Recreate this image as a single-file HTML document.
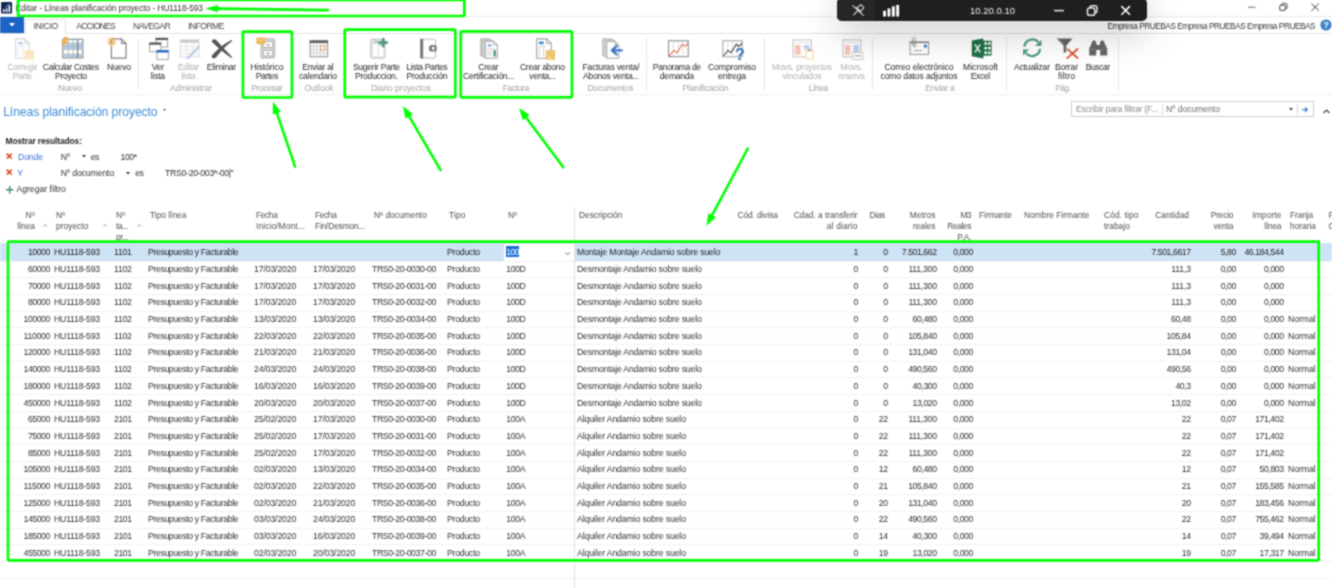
<!DOCTYPE html>
<html lang="es"><head><meta charset="utf-8"><title>Editar - Líneas planificación proyecto - HU1118-593</title>
<style>
html,body{margin:0;padding:0;background:#fff;}
body{width:1332px;height:588px;position:relative;overflow:hidden;font-family:"Liberation Sans",sans-serif;}
.t{position:absolute;white-space:nowrap;line-height:12px;}
.r{position:absolute;}
svg{position:absolute;overflow:visible;}
#blur{position:absolute;left:0;top:0;width:1332px;height:588px;background:#fff;filter:url(#soft);}
</style></head>
<body><svg width="0" height="0" style="position:absolute"><defs><filter id="soft" x="0" y="0" width="100%" height="100%" color-interpolation-filters="sRGB"><feConvolveMatrix order="3" kernelMatrix="1 2 1 2 6 2 1 2 1" edgeMode="duplicate" preserveAlpha="false"/></filter></defs></svg><div id="blur">
<svg style="left:0;top:0" width="14" height="15" viewBox="0 0 14 15"><rect x="1.1" y="2.1" width="11" height="11.4" rx="1" fill="#0f2553"/><rect x="3" y="9.2" width="1.6" height="2.9" fill="#fff"/><rect x="5.8" y="8.4" width="1.6" height="3.7" fill="#fff"/><rect x="8.5" y="5.4" width="1.7" height="6.7" fill="#fff"/><path d="M5.2 7.6L9.8 3.6" stroke="#c8d4ea" stroke-width="0.7"/></svg>
<span class="t " style="top:2px;font-size:8.4px;color:#333;letter-spacing:-0.070px;left:15.50px;">Editar - Líneas planificación proyecto - HU1118-593</span>
<svg style="left:0;top:0" width="1332" height="16" viewBox="0 0 1332 16"><path d="M1248.1 7.3H1255.4" stroke="#808080" stroke-width="1.2"/><g fill="none" stroke="#3c3c3c" stroke-width="1"><rect x="1279.7" y="5.2" width="5.6" height="5.2" rx="1.3"/><path d="M1281.4 4.8C1281.6 3.8 1282.2 3.4 1283.2 3.4H1285.4C1286.6 3.4 1287 3.9 1287 5V7.4C1287 8.4 1286.6 8.9 1285.7 9"/><path d="M1311.5 3.6L1318.9 10.8M1318.9 3.6L1311.5 10.8" stroke="#444"/></g></svg>
<div class="r" style="left:0px;top:16.1px;width:1332px;height:0.9px;background:#e9e9e9;"></div>
<div class="r" style="left:0px;top:16.8px;width:23.7px;height:15.9px;background:#1b63c4;"></div>
<svg style="left:9px;top:23px" width="6" height="4" viewBox="0 0 6 4"><path d="M0 0H6L3 3.6Z" fill="#fff"/></svg>
<div class="r" style="left:0px;top:32.5px;width:1332px;height:0.8px;background:#e2e2e2;"></div>
<div class="r" style="left:25px;top:19px;width:40.5px;height:14.6px;background:#fff;border:0.8px solid #e2e2e2;border-bottom:none;box-sizing:border-box;"></div>
<span class="t " style="top:20px;font-size:8.6px;color:#444;letter-spacing:-0.313px;left:33.50px;">INICIO</span>
<span class="t " style="top:20px;font-size:8.6px;color:#444;letter-spacing:-0.765px;left:76.20px;">ACCIONES</span>
<span class="t " style="top:20px;font-size:8.6px;color:#444;letter-spacing:-0.631px;left:133.00px;">NAVEGAR</span>
<span class="t " style="top:20px;font-size:8.6px;color:#444;letter-spacing:-0.522px;left:188.00px;">INFORME</span>
<span class="t " style="top:21px;font-size:8.2px;color:#333;letter-spacing:-0.413px;right:16.91px;text-align:right;">Empresa PRUEBAS Empresa PRUEBAS Empresa PRUEBAS</span>
<svg style="left:1319.5px;top:19.2px" width="12" height="12" viewBox="0 0 12 12"><circle cx="6" cy="6" r="5.6" fill="#3b7fc6"/><text x="6" y="9.3" font-size="9.4" font-weight="bold" fill="#fff" text-anchor="middle" font-family="Liberation Sans, sans-serif">?</text></svg>
<div class="r" style="left:0px;top:94.4px;width:1332px;height:1px;background:#f1f1f1;"></div>
<div class="r" style="left:138.3px;top:38px;width:0.8px;height:52px;background:#e6e6e6;"></div>
<div class="r" style="left:645.5px;top:38px;width:0.8px;height:52px;background:#e6e6e6;"></div>
<div class="r" style="left:764px;top:38px;width:0.8px;height:52px;background:#e6e6e6;"></div>
<div class="r" style="left:872px;top:38px;width:0.8px;height:52px;background:#e6e6e6;"></div>
<div class="r" style="left:1006px;top:38px;width:0.8px;height:52px;background:#e6e6e6;"></div>
<div class="r" style="left:1117.5px;top:38px;width:0.8px;height:52px;background:#e6e6e6;"></div>
<svg style="left:0;top:0" width="1332" height="100" viewBox="0 0 1332 100"><g opacity="0.42"><g opacity="1"><path d="M15.6 38.9H24.7L29.2 43.4V58.2H15.6Z" fill="#fff" stroke="#9a9a9a" stroke-width="1.1" stroke-linejoin="round"/><path d="M24.7 38.9V43.4H29.2" fill="none" stroke="#9a9a9a" stroke-width="0.9900000000000001"/></g><rect x="18" y="42" width="4.8" height="2.4" rx="0.8" fill="#4a88d8"/><path d="M18 46.5V56M22.6 46.5V56M18 46.5H25" stroke="#b5b5b5" stroke-width="0.8" fill="none"/><rect x="24.6" y="50.2" width="9.4" height="9.4" fill="#efc46c"/><path d="M26.5 57.2H28.6V59.4" stroke="#fff" stroke-width="0.7" fill="none"/></g><g><rect x="62.8" y="39.3" width="20" height="18.6" fill="#fff" stroke="#808080" stroke-width="1.1"/><rect x="63.4" y="43" width="18.8" height="6.6" fill="#b4d0ef"/><rect x="63.4" y="54.2" width="18.8" height="3.1" fill="#b4d0ef"/><path d="M62.8 43H82.8M62.8 46.3H82.8M62.8 49.6H82.8M62.8 54.2H82.8" stroke="#a9a9a9" stroke-width="0.6"/><path d="M68.3 39.3V57.9M73 39.3V57.9" stroke="#ababab" stroke-width="0.7"/><path d="M77.6 39.3V57.9" stroke="#777" stroke-width="1.1"/><path d="M64.4 36.6L68.2 37.4L66 40.6L68.6 41L62.2 47.6L63.6 42.8L61 42.4Z" fill="#efb04e"/></g><g opacity="1"><path d="M111.4 38.9H121.5L126.0 43.4V58.2H111.4Z" fill="#fff" stroke="#808080" stroke-width="1.2" stroke-linejoin="round"/><path d="M121.5 38.9V43.4H126.0" fill="none" stroke="#808080" stroke-width="1.08"/></g><g stroke="#efb04e" stroke-width="1.3" fill="none"><circle cx="111.6" cy="41.8" r="2.1"/><path d="M111.6 37.2V38.9M111.6 44.7V46.4M107 41.8H108.7M114.5 41.8H116.2M108.3 38.5L109.5 39.7M113.7 43.9L114.9 45.1M108.3 45.1L109.5 43.9M113.7 39.7L114.9 38.5"/></g><rect x="156" y="38.3" width="11.6" height="8.8" fill="#fff" stroke="#9a9a9a" stroke-width="0.9"/><rect x="155.55" y="37.849999999999994" width="12.5" height="2.2" fill="#595959"/><rect x="149.6" y="43" width="11.2" height="8.8" fill="#fff" stroke="#9a9a9a" stroke-width="0.9"/><rect x="149.15" y="42.55" width="12.1" height="2.2" fill="#595959"/><rect x="157" y="50.4" width="11.3" height="9" fill="#fff" stroke="#9a9a9a" stroke-width="0.9"/><rect x="156.55" y="49.949999999999996" width="12.200000000000001" height="2.6" fill="#2e6ec2"/><g opacity="0.5"><rect x="180.3" y="39.8" width="18.6" height="17.2" fill="#fff" stroke="#b0b0b0" stroke-width="0.9"/><rect x="180.3" y="39.8" width="18.6" height="3" fill="#999"/><path d="M180.3 46.4H198.9M180.3 49.9H198.9M180.3 53.4H198.9M186.5 42.8V57M192.7 42.8V57" stroke="#bdbdbd" stroke-width="0.7"/><path d="M186.4 59.4L187.6 56.9L198.4 45.7L199.9 47.1L189 58.4Z" fill="#5d97dc"/></g><path d="M211.6 41.6C212.4 39.2 214.8 38.6 216.2 40C220.4 44.6 226 50.8 232 57C232.4 57.6 231.6 58.2 231 57.8C224.6 53.4 217.6 47.8 211.6 41.6Z" fill="#555"/><path d="M211.8 55.8C217 49.4 224 43.6 231 40.2C231.8 39.8 232.4 40.6 231.8 41.2C226.2 45.6 220.2 51.6 216 57.6C214.4 59.2 211 58.2 211.8 55.8Z" fill="#555"/><rect x="261" y="38.8" width="13.6" height="19.2" rx="0.8" fill="#dedede" stroke="#a8a8a8" stroke-width="0.9"/><rect x="263.2" y="41.6" width="9.6" height="5.8" fill="#fff" stroke="#9a9a9a" stroke-width="0.8"/><rect x="263.2" y="50.2" width="9.6" height="5.8" fill="#fff" stroke="#9a9a9a" stroke-width="0.8"/><path d="M266.4 44.6H269.6M268 44.6V46.4M266.4 53.2H269.6M268 53.2V55" stroke="#8a8a8a" stroke-width="0.8"/><rect x="256.4" y="37.6" width="8.6" height="6.4" fill="#efb650"/><path d="M256.6 37.8L260.7 41.2L264.8 37.8" stroke="#fff" stroke-width="0.6" fill="none" opacity="0.7"/><rect x="310.2" y="40.8" width="17.4" height="16" fill="#fff" stroke="#8c8c8c" stroke-width="1"/><rect x="309.7" y="40.3" width="18.4" height="2.8" fill="#666"/><path d="M310.2 46.2H327.6M310.2 49.6H327.6M310.2 53H327.6M313.6 43V56.8M317 43V56.8M320.4 43V56.8M323.8 43V56.8" stroke="#b5b5b5" stroke-width="0.6"/><rect x="320.5" y="46" width="4.3" height="4" fill="#fff" stroke="#f09a58" stroke-width="1"/><rect x="370.8" y="39.2" width="14.2" height="19" rx="0.8" fill="#e4e4e4" stroke="#bdbdbd" stroke-width="0.9"/><rect x="373" y="44.4" width="4.6" height="11.8" fill="#fff"/><rect x="379" y="46" width="4.4" height="10.2" fill="#fff"/><path d="M373.4 42.6L378.4 41.4" stroke="#b5b5b5" stroke-width="0.7"/><path d="M383.2 38V47.2M378.6 42.6H387.8" stroke="#4c9a82" stroke-width="2.6"/><path d="M374 39.6L380.5 45" stroke="#4c9a82" stroke-width="0.8" opacity="0.6"/><rect x="421" y="39.2" width="14.6" height="18.8" rx="1.8" fill="#fff" stroke="#b9b9b9" stroke-width="1"/><rect x="420.2" y="38.8" width="3" height="19.6" fill="#777"/><rect x="429" y="45" width="7.8" height="6.6" rx="2.6" fill="#7c7c7c"/><rect x="432" y="47" width="2.4" height="2.6" fill="#fff"/><path d="M480.6 38.8H489.5L493 42V56H480.6Z" fill="#c9c9c9" stroke="#b0b0b0" stroke-width="0.8"/><path d="M482.8 40H491.6L495 43.4V57.2H482.8Z" fill="#d9d9d9" stroke="#b0b0b0" stroke-width="0.8"/><g opacity="1"><path d="M485.4 41.2H493.79999999999995L497.4 44.800000000000004V58.2H485.4Z" fill="#fff" stroke="#9a9a9a" stroke-width="0.9" stroke-linejoin="round"/><path d="M493.79999999999995 41.2V44.800000000000004H497.4" fill="none" stroke="#9a9a9a" stroke-width="0.81"/></g><rect x="487.8" y="44.2" width="3.8" height="2.4" rx="0.6" fill="#7fb0e8"/><path d="M487.6 48.8H496M488 50V56.4M490.6 50V56.4" stroke="#bdbdbd" stroke-width="0.8"/><rect x="493.4" y="50.2" width="2.5" height="6.4" fill="#4c9a82"/><g opacity="1"><path d="M536.6 38.9H546.7L551.2 43.4V58.2H536.6Z" fill="#fff" stroke="#a0a0a0" stroke-width="1.1" stroke-linejoin="round"/><path d="M546.7 38.9V43.4H551.2" fill="none" stroke="#a0a0a0" stroke-width="0.9900000000000001"/></g><rect x="538.8" y="41.4" width="5" height="2.8" rx="0.9" fill="#4a88d8"/><path d="M539 46.4H546M539.2 47V56M543.6 47V56" stroke="#c4c4c4" stroke-width="0.8" fill="none"/><rect x="545.8" y="50.2" width="9.3" height="9.6" fill="#efc46c"/><path d="M547.6 57.2H549.8V59.6" stroke="#fff" stroke-width="0.7" fill="none" opacity="0.8"/><path d="M602.4 38.8H612L615.4 42V55.6H602.4Z" fill="#d2d2d2" stroke="#b5b5b5" stroke-width="0.8"/><path d="M604.6 40H614L617.2 43.2V57H604.6Z" fill="#dedede" stroke="#b5b5b5" stroke-width="0.8"/><g opacity="1"><path d="M606.8 41.4H615.1999999999999L618.8 45.0V58.2H606.8Z" fill="#fff" stroke="#9a9a9a" stroke-width="0.9" stroke-linejoin="round"/><path d="M615.1999999999999 41.4V45.0H618.8" fill="none" stroke="#9a9a9a" stroke-width="0.81"/></g><path d="M616.6 46.2L611.8 50.3L616.6 54.4M612.4 50.3H621.8" fill="none" stroke="#3a78c8" stroke-width="2.3" stroke-linejoin="round" stroke-linecap="round"/><rect x="668.6" y="40.8" width="19.6" height="15.8" fill="#fff" stroke="#8a8a8a" stroke-width="1.1"/><path d="M673.4 41V56.4M678.2 41V56.4M683 41V56.4" stroke="#cfcfcf" stroke-width="0.7"/><path d="M669.2 55.8L673.8 50.4L677 52.8L682.2 44.4L685 46.4L688 43.4" fill="none" stroke="#e0704e" stroke-width="1.1"/><rect x="722.8" y="40.8" width="19.4" height="16" fill="#fff" stroke="#a5a5a5" stroke-width="1.1"/><path d="M727.6 41V56.4M732.4 41V56.4M737.2 41V56.4" stroke="#d4d4d4" stroke-width="0.7"/><path d="M723.4 56L728 50.4L731 52.8L736.2 44.4L739 46.4L742 43.2" fill="none" stroke="#444" stroke-width="1.1"/><text x="740" y="60" font-size="16" font-weight="bold" fill="#2f6fb8" text-anchor="middle" font-family="Liberation Sans, sans-serif">?</text><g opacity="0.5"><rect x="793.3" y="39.9" width="18" height="17" fill="#fff" stroke="#9c9c9c" stroke-width="1.3"/><path d="M795.5 42.6H809.5" stroke="#aaa" stroke-width="0.7"/><rect x="795.2" y="45" width="5.4" height="9.8" fill="#ee8a70"/><rect x="803.6" y="45" width="5.8" height="4.4" fill="#7fa8e6"/><rect x="805" y="49.8" width="9" height="9.8" rx="0.8" fill="#efc46c"/><rect x="806.6" y="51.6" width="5.8" height="6.6" fill="#fff"/><rect x="807.6" y="49" width="3.8" height="2" fill="#555"/></g><g opacity="0.5"><rect x="843.1" y="39.9" width="17.6" height="17" fill="#fff" stroke="#9c9c9c" stroke-width="1.3"/><path d="M845.2 42.6H859" stroke="#aaa" stroke-width="0.7"/><rect x="845" y="45" width="5.2" height="9.8" fill="#ee8a70"/><rect x="853.4" y="45" width="5.6" height="7.6" fill="#7fa8e6"/><rect x="852.6" y="52.4" width="10.2" height="7" fill="#fff" stroke="#8c8c8c" stroke-width="0.9"/><path d="M854.6 55.8H860.8" stroke="#555" stroke-width="1.2"/></g><rect x="910" y="42.4" width="18.6" height="12" fill="#fff" stroke="#9a9a9a" stroke-width="1"/><path d="M909.5 42.2H929.1" stroke="#777" stroke-width="1.2"/><rect x="924" y="44.6" width="2.8" height="3" fill="#3a78c8"/><path d="M914 50.6H922" stroke="#a5a5a5" stroke-width="1"/><path d="M912.4 45.4V39.4C912.4 37 915.6 37 915.6 39.4V45.6C915.6 47.4 913.6 47.4 913.6 45.6V40.4" fill="none" stroke="#8c8c8c" stroke-width="0.9"/><rect x="982.4" y="40.8" width="9.2" height="14.8" fill="#1e7145"/><g fill="#fff"><rect x="984.4" y="42.2" width="2.6" height="2.6"/><rect x="988" y="42.2" width="2.6" height="2.6"/><rect x="984.4" y="46.8" width="2.6" height="2.6"/><rect x="988" y="46.8" width="2.6" height="2.6"/><rect x="984.4" y="51.4" width="2.6" height="2.6"/><rect x="988" y="51.4" width="2.6" height="2.6"/></g><path d="M971.8 40.4L983.4 38.4V58.4L971.8 56.2Z" fill="#1e7145"/><path d="M975 44.4L980.2 52.4M980.2 44.4L975 52.4" stroke="#fff" stroke-width="1.4"/><g fill="none" stroke="#4c9a82" stroke-width="2.2"><path d="M1024.4 46.6A8 8 0 0 1 1038.4 42.2"/><path d="M1040 48.8A8 8 0 0 1 1026 53.2"/></g><path d="M1041.4 39.8V46H1035.2Z" fill="#4c9a82"/><path d="M1023 55.6V49.4H1029.2Z" fill="#4c9a82"/><path d="M1056.6 38.4H1072.4L1066.2 45.8V52.6H1063.6V45.8Z" fill="#666"/><path d="M1058 39.2L1063.6 44.6" stroke="#bbb" stroke-width="0.7"/><path d="M1067.4 49.2L1077.6 58M1077.6 49L1067.2 58.2" stroke="#d9502b" stroke-width="1.7" stroke-linecap="round"/><g fill="#666"><path d="M1092 42.4C1092 39.8 1096 39.8 1096 42.4L1096.8 45H1099.6L1100.2 42.4C1100.2 39.8 1104.2 39.8 1104.2 42.4L1107.2 48.6V55.6H1100.2V50H1096.2V55.6H1089.2V48.6Z"/></g><path d="M1089.2 49H1096M1100.2 49H1107.2" stroke="#8a8a8a" stroke-width="0.6"/></svg>
<span class="t " style="top:61px;font-size:8.6px;color:#b0b0b0;letter-spacing:-0.132px;left:-127.57px;width:300px;text-align:center;">Corregir</span>
<span class="t " style="top:70px;font-size:8.6px;color:#b0b0b0;letter-spacing:-0.311px;left:-127.66px;width:300px;text-align:center;">Parte</span>
<span class="t " style="top:61px;font-size:8.6px;color:#262626;letter-spacing:-0.313px;left:-79.16px;width:300px;text-align:center;">Calcular Costes</span>
<span class="t " style="top:70px;font-size:8.6px;color:#262626;letter-spacing:-0.242px;left:-79.12px;width:300px;text-align:center;">Proyecto</span>
<span class="t " style="top:61px;font-size:8.6px;color:#262626;letter-spacing:-0.172px;left:-31.09px;width:300px;text-align:center;">Nuevo</span>
<span class="t " style="top:82px;font-size:8.5px;color:#a2a2a2;letter-spacing:-0.114px;left:-80.06px;width:300px;text-align:center;">Nuevo</span>
<span class="t " style="top:61px;font-size:8.6px;color:#262626;letter-spacing:-0.303px;left:7.85px;width:300px;text-align:center;">Ver</span>
<span class="t " style="top:70px;font-size:8.6px;color:#262626;letter-spacing:-0.259px;left:7.87px;width:300px;text-align:center;">lista</span>
<span class="t " style="top:61px;font-size:8.6px;color:#b0b0b0;letter-spacing:-0.244px;left:38.38px;width:300px;text-align:center;">Editar</span>
<span class="t " style="top:70px;font-size:8.6px;color:#b0b0b0;letter-spacing:-0.259px;left:38.37px;width:300px;text-align:center;">lista</span>
<span class="t " style="top:61px;font-size:8.6px;color:#262626;letter-spacing:-0.258px;left:71.37px;width:300px;text-align:center;">Eliminar</span>
<span class="t " style="top:82px;font-size:8.5px;color:#a2a2a2;letter-spacing:-0.089px;left:40.96px;width:300px;text-align:center;">Administrar</span>
<span class="t " style="top:61px;font-size:8.6px;color:#262626;letter-spacing:-0.050px;left:116.98px;width:300px;text-align:center;">Histórico</span>
<span class="t " style="top:70px;font-size:8.6px;color:#262626;letter-spacing:-0.476px;left:116.76px;width:300px;text-align:center;">Partes</span>
<span class="t " style="top:82px;font-size:8.5px;color:#a2a2a2;letter-spacing:-0.376px;left:116.81px;width:300px;text-align:center;">Procesar</span>
<span class="t " style="top:61px;font-size:8.6px;color:#262626;letter-spacing:-0.273px;left:167.86px;width:300px;text-align:center;">Enviar al</span>
<span class="t " style="top:70px;font-size:8.6px;color:#262626;letter-spacing:-0.168px;left:167.92px;width:300px;text-align:center;">calendario</span>
<span class="t " style="top:82px;font-size:8.5px;color:#a2a2a2;letter-spacing:-0.042px;left:168.98px;width:300px;text-align:center;">Outlook</span>
<span class="t " style="top:61px;font-size:8.6px;color:#262626;letter-spacing:-0.282px;left:226.36px;width:300px;text-align:center;">Sugerir Parte</span>
<span class="t " style="top:70px;font-size:8.6px;color:#262626;letter-spacing:-0.219px;left:226.39px;width:300px;text-align:center;">Produccion.</span>
<span class="t " style="top:61px;font-size:8.6px;color:#262626;letter-spacing:-0.367px;left:276.82px;width:300px;text-align:center;">Lista Partes</span>
<span class="t " style="top:70px;font-size:8.6px;color:#262626;letter-spacing:-0.202px;left:276.90px;width:300px;text-align:center;">Producción</span>
<span class="t " style="top:82px;font-size:8.5px;color:#a2a2a2;letter-spacing:-0.088px;left:250.96px;width:300px;text-align:center;">Diario proyectos</span>
<span class="t " style="top:61px;font-size:8.6px;color:#262626;letter-spacing:-0.301px;left:338.35px;width:300px;text-align:center;">Crear</span>
<span class="t " style="top:70px;font-size:8.6px;color:#262626;letter-spacing:-0.218px;left:338.39px;width:300px;text-align:center;">Certificación...</span>
<span class="t " style="top:61px;font-size:8.6px;color:#262626;letter-spacing:-0.255px;left:392.37px;width:300px;text-align:center;">Crear abono</span>
<span class="t " style="top:70px;font-size:8.6px;color:#262626;letter-spacing:-0.275px;left:392.36px;width:300px;text-align:center;">venta...</span>
<span class="t " style="top:82px;font-size:8.5px;color:#a2a2a2;letter-spacing:-0.402px;left:365.80px;width:300px;text-align:center;">Factura</span>
<span class="t " style="top:61px;font-size:8.6px;color:#262626;letter-spacing:-0.151px;left:460.92px;width:300px;text-align:center;">Facturas venta/</span>
<span class="t " style="top:70px;font-size:8.6px;color:#262626;letter-spacing:-0.251px;left:460.87px;width:300px;text-align:center;">Abonos venta...</span>
<span class="t " style="top:82px;font-size:8.5px;color:#a2a2a2;letter-spacing:-0.171px;left:460.41px;width:300px;text-align:center;">Documentos</span>
<span class="t " style="top:61px;font-size:8.6px;color:#262626;letter-spacing:-0.330px;left:526.84px;width:300px;text-align:center;">Panorama de</span>
<span class="t " style="top:70px;font-size:8.6px;color:#262626;letter-spacing:-0.265px;left:526.87px;width:300px;text-align:center;">demanda</span>
<span class="t " style="top:61px;font-size:8.6px;color:#262626;letter-spacing:-0.074px;left:581.96px;width:300px;text-align:center;">Compromiso</span>
<span class="t " style="top:70px;font-size:8.6px;color:#262626;letter-spacing:-0.166px;left:581.92px;width:300px;text-align:center;">entrega</span>
<span class="t " style="top:82px;font-size:8.5px;color:#a2a2a2;letter-spacing:-0.132px;left:555.43px;width:300px;text-align:center;">Planificación</span>
<span class="t " style="top:61px;font-size:8.6px;color:#b0b0b0;letter-spacing:-0.174px;left:651.91px;width:300px;text-align:center;">Movs. proyectos</span>
<span class="t " style="top:70px;font-size:8.6px;color:#b0b0b0;letter-spacing:-0.163px;left:651.92px;width:300px;text-align:center;">vinculados</span>
<span class="t " style="top:61px;font-size:8.6px;color:#b0b0b0;letter-spacing:-0.187px;left:701.41px;width:300px;text-align:center;">Movs.</span>
<span class="t " style="top:70px;font-size:8.6px;color:#b0b0b0;letter-spacing:-0.382px;left:701.31px;width:300px;text-align:center;">reserva</span>
<span class="t " style="top:82px;font-size:8.5px;color:#a2a2a2;letter-spacing:-0.454px;left:668.27px;width:300px;text-align:center;">Línea</span>
<span class="t " style="top:61px;font-size:8.6px;color:#262626;letter-spacing:-0.070px;left:768.96px;width:300px;text-align:center;">Correo electrónico</span>
<span class="t " style="top:70px;font-size:8.6px;color:#262626;letter-spacing:-0.124px;left:768.94px;width:300px;text-align:center;">como datos adjuntos</span>
<span class="t " style="top:61px;font-size:8.6px;color:#262626;letter-spacing:0.013px;left:830.51px;width:300px;text-align:center;">Microsoft</span>
<span class="t " style="top:70px;font-size:8.6px;color:#262626;letter-spacing:-0.406px;left:830.30px;width:300px;text-align:center;">Excel</span>
<span class="t " style="top:82px;font-size:8.5px;color:#a2a2a2;letter-spacing:-0.273px;left:789.86px;width:300px;text-align:center;">Enviar a</span>
<span class="t " style="top:61px;font-size:8.6px;color:#262626;letter-spacing:-0.176px;left:881.91px;width:300px;text-align:center;">Actualizar</span>
<span class="t " style="top:61px;font-size:8.6px;color:#262626;letter-spacing:-0.149px;left:916.43px;width:300px;text-align:center;">Borrar</span>
<span class="t " style="top:70px;font-size:8.6px;color:#262626;letter-spacing:0.126px;left:916.56px;width:300px;text-align:center;">filtro</span>
<span class="t " style="top:61px;font-size:8.6px;color:#262626;letter-spacing:-0.461px;left:947.77px;width:300px;text-align:center;">Buscar</span>
<span class="t " style="top:82px;font-size:8.5px;color:#a2a2a2;letter-spacing:-0.621px;left:912.69px;width:300px;text-align:center;">Pág.</span>
<span class="t " style="top:104px;font-size:12.2px;color:#3f8bd8;letter-spacing:-0.098px;line-height:16px;left:3.20px;">Líneas planificación proyecto</span>
<svg style="left:163.1px;top:109.2px" width="3.2" height="2.2" viewBox="0 0 3.2 2.2"><path d="M0 0H3.2L1.6 2Z" fill="#555"/></svg>
<span class="t " style="top:135px;font-size:8.4px;color:#222;letter-spacing:-0.101px;font-weight:bold;left:5.60px;">Mostrar resultados:</span>
<svg style="left:6px;top:153.4px" width="6.4" height="6.4" viewBox="0 0 6.4 6.4"><path d="M0.6 0.6L5.8 5.8M5.8 0.6L0.6 5.8" stroke="#d9452b" stroke-width="1.5"/></svg>
<span class="t " style="top:151px;font-size:8.7px;color:#3c6fd6;letter-spacing:-0.127px;left:18.00px;">Donde</span>
<span class="t " style="top:151px;font-size:8.7px;color:#303030;letter-spacing:0.119px;left:60.70px;">Nº</span>
<svg style="left:81.9px;top:155.4px" width="4" height="3" viewBox="0 0 4 3"><path d="M0 0H4L2 2.6Z" fill="#333"/></svg>
<span class="t " style="top:151px;font-size:8.7px;color:#303030;letter-spacing:-0.694px;left:90.80px;">es</span>
<span class="t " style="top:151px;font-size:8.7px;color:#303030;letter-spacing:-0.425px;left:120.50px;">100*</span>
<svg style="left:6px;top:169.20000000000002px" width="6.4" height="6.4" viewBox="0 0 6.4 6.4"><path d="M0.6 0.6L5.8 5.8M5.8 0.6L0.6 5.8" stroke="#d9452b" stroke-width="1.5"/></svg>
<span class="t " style="top:167px;font-size:8.7px;color:#3c6fd6;left:17.20px;">Y</span>
<span class="t " style="top:167px;font-size:8.7px;color:#303030;letter-spacing:-0.118px;left:60.70px;">Nº documento</span>
<svg style="left:126.30000000000001px;top:171.60000000000002px" width="4" height="3" viewBox="0 0 4 3"><path d="M0 0H4L2 2.6Z" fill="#333"/></svg>
<span class="t " style="top:167px;font-size:8.7px;color:#303030;letter-spacing:-0.694px;left:135.30px;">es</span>
<span class="t " style="top:167px;font-size:8.7px;color:#303030;letter-spacing:-0.292px;left:165.00px;">TRS0-20-003*-00|&#x27;&#x27;</span>
<svg style="left:6px;top:186px" width="7.4" height="7.4" viewBox="0 0 7.4 7.4"><path d="M3.7 0V7.4M0 3.7H7.4" stroke="#3c8f6a" stroke-width="1.5"/></svg>
<span class="t " style="top:183px;font-size:8.7px;color:#303030;letter-spacing:-0.014px;left:16.40px;">Agregar filtro</span>
<div class="r" style="left:1071px;top:101px;width:242.5px;height:16px;background:#fff;border:0.8px solid #cfcfcf;box-sizing:border-box;"></div>
<span class="t " style="top:103px;font-size:8.7px;color:#8a8a8a;letter-spacing:-0.203px;left:1076.00px;">Escribir para filtrar (F...</span>
<div class="r" style="left:1161.5px;top:103.5px;width:0.8px;height:11px;background:#d8d8d8;"></div>
<span class="t " style="top:103px;font-size:8.7px;color:#6a6a6a;letter-spacing:-0.077px;left:1166.00px;">Nº documento</span>
<svg style="left:1289px;top:108.39999999999999px" width="4" height="3" viewBox="0 0 4 3"><path d="M0 0H4L2 2.6Z" fill="#333"/></svg>
<div class="r" style="left:1296.5px;top:103.5px;width:0.8px;height:11px;background:#d8d8d8;"></div>
<svg style="left:1301.5px;top:106.8px" width="6" height="5.4" viewBox="0 0 6 5.4"><path d="M0 2.7H5M3 0.5L5.3 2.7L3 4.9" fill="none" stroke="#2a6fd0" stroke-width="1.1"/></svg>
<svg style="left:1323px;top:108.5px" width="7" height="4.5" viewBox="0 0 7 4.5"><path d="M0.5 4L3.5 1L6.5 4" fill="none" stroke="#444" stroke-width="1.2"/></svg>
<div class="r" style="left:0px;top:243.4px;width:1332px;height:17.3px;background:#cfe3f6;"></div>
<div class="r" style="left:0px;top:260.5px;width:1332px;height:0.8px;background:#f2f2f2;"></div>
<div class="r" style="left:0px;top:277.2px;width:1332px;height:0.8px;background:#f2f2f2;"></div>
<div class="r" style="left:0px;top:293.9px;width:1332px;height:0.8px;background:#f2f2f2;"></div>
<div class="r" style="left:0px;top:310.6px;width:1332px;height:0.8px;background:#f2f2f2;"></div>
<div class="r" style="left:0px;top:327.3px;width:1332px;height:0.8px;background:#f2f2f2;"></div>
<div class="r" style="left:0px;top:344.0px;width:1332px;height:0.8px;background:#f2f2f2;"></div>
<div class="r" style="left:0px;top:360.7px;width:1332px;height:0.8px;background:#f2f2f2;"></div>
<div class="r" style="left:0px;top:377.4px;width:1332px;height:0.8px;background:#f2f2f2;"></div>
<div class="r" style="left:0px;top:394.1px;width:1332px;height:0.8px;background:#f2f2f2;"></div>
<div class="r" style="left:0px;top:410.79999999999995px;width:1332px;height:0.8px;background:#f2f2f2;"></div>
<div class="r" style="left:0px;top:427.5px;width:1332px;height:0.8px;background:#f2f2f2;"></div>
<div class="r" style="left:0px;top:444.2px;width:1332px;height:0.8px;background:#f2f2f2;"></div>
<div class="r" style="left:0px;top:460.9px;width:1332px;height:0.8px;background:#f2f2f2;"></div>
<div class="r" style="left:0px;top:477.6px;width:1332px;height:0.8px;background:#f2f2f2;"></div>
<div class="r" style="left:0px;top:494.29999999999995px;width:1332px;height:0.8px;background:#f2f2f2;"></div>
<div class="r" style="left:0px;top:511.0px;width:1332px;height:0.8px;background:#f2f2f2;"></div>
<div class="r" style="left:0px;top:527.7px;width:1332px;height:0.8px;background:#f2f2f2;"></div>
<div class="r" style="left:0px;top:544.4px;width:1332px;height:0.8px;background:#f2f2f2;"></div>
<div class="r" style="left:0px;top:561.0999999999999px;width:1332px;height:0.8px;background:#f2f2f2;"></div>
<div class="r" style="left:0px;top:577.8px;width:1332px;height:0.8px;background:#f2f2f2;"></div>
<div class="r" style="left:574px;top:207px;width:0.8px;height:381px;background:#e2e2e2;"></div>
<div class="r" style="left:503.6px;top:243.8px;width:70.4px;height:16.8px;background:#fff;"></div>
<div class="r" style="left:505.8px;top:246.4px;width:13.3px;height:11px;background:#1a6fd4;"></div>
<svg style="left:565.4px;top:251.8px" width="5.4" height="3.4" viewBox="0 0 5.4 3.4"><path d="M0.4 0.4L2.7 2.8L5 0.4" fill="none" stroke="#5a5a5a" stroke-width="0.9"/></svg>
<span class="t " style="top:209px;font-size:8.4px;color:#4e4e4e;letter-spacing:0.183px;right:1297.02px;text-align:right;">Nº</span>
<span class="t " style="top:220px;font-size:8.4px;color:#4e4e4e;letter-spacing:-0.143px;right:1297.34px;text-align:right;">línea</span>
<svg style="left:43.3px;top:224px" width="4.4" height="2.8" viewBox="0 0 4.4 2.8"><path d="M0.4 2.4L2.2 0.6L4 2.4" fill="none" stroke="#8a8a8a" stroke-width="0.9"/></svg>
<span class="t " style="top:209px;font-size:8.4px;color:#4e4e4e;letter-spacing:0.183px;left:56.00px;">Nº</span>
<span class="t " style="top:220px;font-size:8.4px;color:#4e4e4e;letter-spacing:0.023px;left:56.00px;">proyecto</span>
<svg style="left:102.8px;top:224px" width="4.4" height="2.8" viewBox="0 0 4.4 2.8"><path d="M0.4 2.4L2.2 0.6L4 2.4" fill="none" stroke="#8a8a8a" stroke-width="0.9"/></svg>
<span class="t " style="top:209px;font-size:8.4px;color:#4e4e4e;letter-spacing:0.183px;left:116.00px;">Nº</span>
<span class="t " style="top:220px;font-size:8.4px;color:#4e4e4e;letter-spacing:-0.421px;left:116.00px;">ta...</span>
<span class="t " style="top:231px;font-size:8.4px;color:#4e4e4e;letter-spacing:-0.421px;left:116.00px;">pr...</span>
<svg style="left:137.3px;top:224px" width="4.4" height="2.8" viewBox="0 0 4.4 2.8"><path d="M0.4 2.4L2.2 0.6L4 2.4" fill="none" stroke="#8a8a8a" stroke-width="0.9"/></svg>
<span class="t " style="top:209px;font-size:8.4px;color:#4e4e4e;letter-spacing:-0.008px;left:150.00px;">Tipo línea</span>
<span class="t " style="top:209px;font-size:8.4px;color:#4e4e4e;letter-spacing:-0.369px;left:256.00px;">Fecha</span>
<span class="t " style="top:220px;font-size:8.4px;color:#4e4e4e;letter-spacing:0.099px;left:256.00px;">Inicio/Mont...</span>
<span class="t " style="top:209px;font-size:8.4px;color:#4e4e4e;letter-spacing:-0.369px;left:315.00px;">Fecha</span>
<span class="t " style="top:220px;font-size:8.4px;color:#4e4e4e;letter-spacing:-0.175px;left:315.00px;">Fin/Desmon...</span>
<span class="t " style="top:209px;font-size:8.4px;color:#4e4e4e;letter-spacing:-0.002px;left:374.00px;">Nº documento</span>
<span class="t " style="top:209px;font-size:8.4px;color:#4e4e4e;letter-spacing:0.118px;left:449.00px;">Tipo</span>
<span class="t " style="top:209px;font-size:8.4px;color:#4e4e4e;letter-spacing:-0.067px;left:508.00px;">Nº</span>
<span class="t " style="top:209px;font-size:8.4px;color:#4e4e4e;letter-spacing:-0.035px;left:579.00px;">Descripción</span>
<span class="t " style="top:209px;font-size:8.4px;color:#4e4e4e;letter-spacing:-0.096px;left:737.50px;">Cód. divisa</span>
<span class="t " style="top:209px;font-size:8.4px;color:#4e4e4e;letter-spacing:-0.049px;right:474.55px;text-align:right;">Cdad. a transferir</span>
<span class="t " style="top:220px;font-size:8.4px;color:#4e4e4e;letter-spacing:0.176px;right:474.32px;text-align:right;">al diario</span>
<span class="t " style="top:209px;font-size:8.4px;color:#4e4e4e;letter-spacing:-0.326px;left:869.50px;">Dias</span>
<span class="t " style="top:209px;font-size:8.4px;color:#4e4e4e;letter-spacing:0.055px;right:396.44px;text-align:right;">Metros</span>
<span class="t " style="top:220px;font-size:8.4px;color:#4e4e4e;letter-spacing:-0.063px;right:396.56px;text-align:right;">reales</span>
<span class="t " style="top:209px;font-size:8.4px;color:#4e4e4e;letter-spacing:-0.584px;right:361.08px;text-align:right;">M3</span>
<span class="t " style="top:220px;font-size:8.4px;color:#4e4e4e;letter-spacing:-0.358px;right:360.86px;text-align:right;">Reales</span>
<span class="t " style="top:231px;font-size:8.4px;color:#4e4e4e;letter-spacing:-0.198px;right:360.70px;text-align:right;">P.A.</span>
<span class="t " style="top:209px;font-size:8.4px;color:#4e4e4e;letter-spacing:-0.017px;left:979.00px;">Firmante</span>
<span class="t " style="top:209px;font-size:8.4px;color:#4e4e4e;letter-spacing:0.010px;left:1024.00px;">Nombre Firmante</span>
<span class="t " style="top:209px;font-size:8.4px;color:#4e4e4e;letter-spacing:0.098px;left:1104.00px;">Cód. tipo</span>
<span class="t " style="top:220px;font-size:8.4px;color:#4e4e4e;letter-spacing:0.045px;left:1104.00px;">trabajo</span>
<span class="t " style="top:209px;font-size:8.4px;color:#4e4e4e;letter-spacing:0.047px;right:142.95px;text-align:right;">Cantidad</span>
<span class="t " style="top:209px;font-size:8.4px;color:#4e4e4e;letter-spacing:-0.218px;right:98.72px;text-align:right;">Precio</span>
<span class="t " style="top:220px;font-size:8.4px;color:#4e4e4e;letter-spacing:-0.109px;right:98.61px;text-align:right;">venta</span>
<span class="t " style="top:209px;font-size:8.4px;color:#4e4e4e;letter-spacing:0.146px;right:50.35px;text-align:right;">Importe</span>
<span class="t " style="top:220px;font-size:8.4px;color:#4e4e4e;letter-spacing:-0.243px;right:50.74px;text-align:right;">línea</span>
<span class="t " style="top:209px;font-size:8.4px;color:#4e4e4e;letter-spacing:-0.135px;left:1290.00px;">Franja</span>
<span class="t " style="top:220px;font-size:8.4px;color:#4e4e4e;letter-spacing:-0.021px;left:1290.00px;">horaria</span>
<span class="t " style="top:209px;font-size:8.4px;color:#4e4e4e;left:1328.50px;">F</span>
<span class="t " style="top:220px;font-size:8.4px;color:#4e4e4e;left:1328.50px;">C</span>
<span class="t " style="top:246px;font-size:8.7px;color:#222;letter-spacing:-0.438px;right:1282.14px;text-align:right;">10000</span>
<span class="t " style="top:246px;font-size:8.7px;color:#222;letter-spacing:-0.204px;left:54.00px;">HU1118-593</span>
<span class="t " style="top:246px;font-size:8.7px;color:#222;letter-spacing:-0.277px;left:114.00px;">1101</span>
<span class="t " style="top:246px;font-size:8.7px;color:#222;letter-spacing:-0.368px;left:148.00px;">Presupuesto y Facturable</span>
<span class="t " style="top:246px;font-size:8.7px;color:#222;letter-spacing:-0.227px;left:447.00px;">Producto</span>
<span class="t " style="top:246px;font-size:8.7px;color:#fff;letter-spacing:-0.638px;left:506.20px;">100</span>
<span class="t " style="top:246px;font-size:8.7px;color:#222;letter-spacing:-0.128px;left:577.00px;">Montaje Montaje Andamio sobre suelo</span>
<span class="t " style="top:246px;font-size:8.7px;color:#222;right:473.70px;text-align:right;">1</span>
<span class="t " style="top:246px;font-size:8.7px;color:#222;right:444.00px;text-align:right;">0</span>
<span class="t " style="top:246px;font-size:8.7px;color:#222;letter-spacing:-0.433px;right:395.43px;text-align:right;">7.501,662</span>
<span class="t " style="top:246px;font-size:8.7px;color:#222;letter-spacing:-0.434px;right:359.13px;text-align:right;">0,000</span>
<span class="t " style="top:246px;font-size:8.7px;color:#222;letter-spacing:-0.434px;right:141.43px;text-align:right;">7.501,6617</span>
<span class="t " style="top:246px;font-size:8.7px;color:#222;letter-spacing:-0.433px;right:96.13px;text-align:right;">5,80</span>
<span class="t " style="top:246px;font-size:8.7px;color:#222;letter-spacing:-0.434px;right:48.43px;text-align:right;">46.184,544</span>
<span class="t " style="top:263px;font-size:8.7px;color:#303030;letter-spacing:-0.438px;right:1282.14px;text-align:right;">60000</span>
<span class="t " style="top:263px;font-size:8.7px;color:#303030;letter-spacing:-0.204px;left:54.00px;">HU1118-593</span>
<span class="t " style="top:263px;font-size:8.7px;color:#303030;letter-spacing:-0.277px;left:114.00px;">1102</span>
<span class="t " style="top:263px;font-size:8.7px;color:#303030;letter-spacing:-0.368px;left:148.00px;">Presupuesto y Facturable</span>
<span class="t " style="top:263px;font-size:8.7px;color:#303030;letter-spacing:-0.124px;left:254.00px;">17/03/2020</span>
<span class="t " style="top:263px;font-size:8.7px;color:#303030;letter-spacing:-0.124px;left:313.00px;">17/03/2020</span>
<span class="t " style="top:263px;font-size:8.7px;color:#303030;letter-spacing:-0.376px;left:372.00px;">TRS0-20-0030-00</span>
<span class="t " style="top:263px;font-size:8.7px;color:#303030;letter-spacing:-0.227px;left:447.00px;">Producto</span>
<span class="t " style="top:263px;font-size:8.7px;color:#303030;letter-spacing:-0.449px;left:506.30px;">100D</span>
<span class="t " style="top:263px;font-size:8.7px;color:#303030;letter-spacing:-0.179px;left:577.00px;">Desmontaje Andamio sobre suelo</span>
<span class="t " style="top:263px;font-size:8.7px;color:#303030;right:473.70px;text-align:right;">0</span>
<span class="t " style="top:263px;font-size:8.7px;color:#303030;right:444.00px;text-align:right;">0</span>
<span class="t " style="top:263px;font-size:8.7px;color:#303030;letter-spacing:-0.251px;right:395.25px;text-align:right;">111,300</span>
<span class="t " style="top:263px;font-size:8.7px;color:#303030;letter-spacing:-0.434px;right:359.13px;text-align:right;">0,000</span>
<span class="t " style="top:263px;font-size:8.7px;color:#303030;letter-spacing:-0.176px;right:141.18px;text-align:right;">111,3</span>
<span class="t " style="top:263px;font-size:8.7px;color:#303030;letter-spacing:-0.433px;right:96.13px;text-align:right;">0,00</span>
<span class="t " style="top:263px;font-size:8.7px;color:#303030;letter-spacing:-0.434px;right:48.43px;text-align:right;">0,000</span>
<span class="t " style="top:280px;font-size:8.7px;color:#303030;letter-spacing:-0.438px;right:1282.14px;text-align:right;">70000</span>
<span class="t " style="top:280px;font-size:8.7px;color:#303030;letter-spacing:-0.204px;left:54.00px;">HU1118-593</span>
<span class="t " style="top:280px;font-size:8.7px;color:#303030;letter-spacing:-0.277px;left:114.00px;">1102</span>
<span class="t " style="top:280px;font-size:8.7px;color:#303030;letter-spacing:-0.368px;left:148.00px;">Presupuesto y Facturable</span>
<span class="t " style="top:280px;font-size:8.7px;color:#303030;letter-spacing:-0.124px;left:254.00px;">17/03/2020</span>
<span class="t " style="top:280px;font-size:8.7px;color:#303030;letter-spacing:-0.124px;left:313.00px;">17/03/2020</span>
<span class="t " style="top:280px;font-size:8.7px;color:#303030;letter-spacing:-0.376px;left:372.00px;">TRS0-20-0031-00</span>
<span class="t " style="top:280px;font-size:8.7px;color:#303030;letter-spacing:-0.227px;left:447.00px;">Producto</span>
<span class="t " style="top:280px;font-size:8.7px;color:#303030;letter-spacing:-0.449px;left:506.30px;">100D</span>
<span class="t " style="top:280px;font-size:8.7px;color:#303030;letter-spacing:-0.179px;left:577.00px;">Desmontaje Andamio sobre suelo</span>
<span class="t " style="top:280px;font-size:8.7px;color:#303030;right:473.70px;text-align:right;">0</span>
<span class="t " style="top:280px;font-size:8.7px;color:#303030;right:444.00px;text-align:right;">0</span>
<span class="t " style="top:280px;font-size:8.7px;color:#303030;letter-spacing:-0.251px;right:395.25px;text-align:right;">111,300</span>
<span class="t " style="top:280px;font-size:8.7px;color:#303030;letter-spacing:-0.434px;right:359.13px;text-align:right;">0,000</span>
<span class="t " style="top:280px;font-size:8.7px;color:#303030;letter-spacing:-0.176px;right:141.18px;text-align:right;">111,3</span>
<span class="t " style="top:280px;font-size:8.7px;color:#303030;letter-spacing:-0.433px;right:96.13px;text-align:right;">0,00</span>
<span class="t " style="top:280px;font-size:8.7px;color:#303030;letter-spacing:-0.434px;right:48.43px;text-align:right;">0,000</span>
<span class="t " style="top:296px;font-size:8.7px;color:#303030;letter-spacing:-0.438px;right:1282.14px;text-align:right;">80000</span>
<span class="t " style="top:296px;font-size:8.7px;color:#303030;letter-spacing:-0.204px;left:54.00px;">HU1118-593</span>
<span class="t " style="top:296px;font-size:8.7px;color:#303030;letter-spacing:-0.277px;left:114.00px;">1102</span>
<span class="t " style="top:296px;font-size:8.7px;color:#303030;letter-spacing:-0.368px;left:148.00px;">Presupuesto y Facturable</span>
<span class="t " style="top:296px;font-size:8.7px;color:#303030;letter-spacing:-0.124px;left:254.00px;">17/03/2020</span>
<span class="t " style="top:296px;font-size:8.7px;color:#303030;letter-spacing:-0.124px;left:313.00px;">17/03/2020</span>
<span class="t " style="top:296px;font-size:8.7px;color:#303030;letter-spacing:-0.376px;left:372.00px;">TRS0-20-0032-00</span>
<span class="t " style="top:296px;font-size:8.7px;color:#303030;letter-spacing:-0.227px;left:447.00px;">Producto</span>
<span class="t " style="top:296px;font-size:8.7px;color:#303030;letter-spacing:-0.449px;left:506.30px;">100D</span>
<span class="t " style="top:296px;font-size:8.7px;color:#303030;letter-spacing:-0.179px;left:577.00px;">Desmontaje Andamio sobre suelo</span>
<span class="t " style="top:296px;font-size:8.7px;color:#303030;right:473.70px;text-align:right;">0</span>
<span class="t " style="top:296px;font-size:8.7px;color:#303030;right:444.00px;text-align:right;">0</span>
<span class="t " style="top:296px;font-size:8.7px;color:#303030;letter-spacing:-0.251px;right:395.25px;text-align:right;">111,300</span>
<span class="t " style="top:296px;font-size:8.7px;color:#303030;letter-spacing:-0.434px;right:359.13px;text-align:right;">0,000</span>
<span class="t " style="top:296px;font-size:8.7px;color:#303030;letter-spacing:-0.176px;right:141.18px;text-align:right;">111,3</span>
<span class="t " style="top:296px;font-size:8.7px;color:#303030;letter-spacing:-0.433px;right:96.13px;text-align:right;">0,00</span>
<span class="t " style="top:296px;font-size:8.7px;color:#303030;letter-spacing:-0.434px;right:48.43px;text-align:right;">0,000</span>
<span class="t " style="top:313px;font-size:8.7px;color:#303030;letter-spacing:-0.438px;right:1282.14px;text-align:right;">100000</span>
<span class="t " style="top:313px;font-size:8.7px;color:#303030;letter-spacing:-0.204px;left:54.00px;">HU1118-593</span>
<span class="t " style="top:313px;font-size:8.7px;color:#303030;letter-spacing:-0.277px;left:114.00px;">1102</span>
<span class="t " style="top:313px;font-size:8.7px;color:#303030;letter-spacing:-0.368px;left:148.00px;">Presupuesto y Facturable</span>
<span class="t " style="top:313px;font-size:8.7px;color:#303030;letter-spacing:-0.124px;left:254.00px;">13/03/2020</span>
<span class="t " style="top:313px;font-size:8.7px;color:#303030;letter-spacing:-0.124px;left:313.00px;">13/03/2020</span>
<span class="t " style="top:313px;font-size:8.7px;color:#303030;letter-spacing:-0.376px;left:372.00px;">TRS0-20-0034-00</span>
<span class="t " style="top:313px;font-size:8.7px;color:#303030;letter-spacing:-0.227px;left:447.00px;">Producto</span>
<span class="t " style="top:313px;font-size:8.7px;color:#303030;letter-spacing:-0.449px;left:506.30px;">100D</span>
<span class="t " style="top:313px;font-size:8.7px;color:#303030;letter-spacing:-0.179px;left:577.00px;">Desmontaje Andamio sobre suelo</span>
<span class="t " style="top:313px;font-size:8.7px;color:#303030;right:473.70px;text-align:right;">0</span>
<span class="t " style="top:313px;font-size:8.7px;color:#303030;right:444.00px;text-align:right;">0</span>
<span class="t " style="top:313px;font-size:8.7px;color:#303030;letter-spacing:-0.435px;right:395.43px;text-align:right;">60,480</span>
<span class="t " style="top:313px;font-size:8.7px;color:#303030;letter-spacing:-0.434px;right:359.13px;text-align:right;">0,000</span>
<span class="t " style="top:313px;font-size:8.7px;color:#303030;letter-spacing:-0.434px;right:141.43px;text-align:right;">60,48</span>
<span class="t " style="top:313px;font-size:8.7px;color:#303030;letter-spacing:-0.433px;right:96.13px;text-align:right;">0,00</span>
<span class="t " style="top:313px;font-size:8.7px;color:#303030;letter-spacing:-0.434px;right:48.43px;text-align:right;">0,000</span>
<span class="t " style="top:313px;font-size:8.7px;color:#303030;letter-spacing:-0.089px;left:1288.00px;">Normal</span>
<span class="t " style="top:330px;font-size:8.7px;color:#303030;letter-spacing:-0.330px;right:1282.03px;text-align:right;">110000</span>
<span class="t " style="top:330px;font-size:8.7px;color:#303030;letter-spacing:-0.204px;left:54.00px;">HU1118-593</span>
<span class="t " style="top:330px;font-size:8.7px;color:#303030;letter-spacing:-0.277px;left:114.00px;">1102</span>
<span class="t " style="top:330px;font-size:8.7px;color:#303030;letter-spacing:-0.368px;left:148.00px;">Presupuesto y Facturable</span>
<span class="t " style="top:330px;font-size:8.7px;color:#303030;letter-spacing:-0.124px;left:254.00px;">22/03/2020</span>
<span class="t " style="top:330px;font-size:8.7px;color:#303030;letter-spacing:-0.124px;left:313.00px;">22/03/2020</span>
<span class="t " style="top:330px;font-size:8.7px;color:#303030;letter-spacing:-0.376px;left:372.00px;">TRS0-20-0035-00</span>
<span class="t " style="top:330px;font-size:8.7px;color:#303030;letter-spacing:-0.227px;left:447.00px;">Producto</span>
<span class="t " style="top:330px;font-size:8.7px;color:#303030;letter-spacing:-0.449px;left:506.30px;">100D</span>
<span class="t " style="top:330px;font-size:8.7px;color:#303030;letter-spacing:-0.179px;left:577.00px;">Desmontaje Andamio sobre suelo</span>
<span class="t " style="top:330px;font-size:8.7px;color:#303030;right:473.70px;text-align:right;">0</span>
<span class="t " style="top:330px;font-size:8.7px;color:#303030;right:444.00px;text-align:right;">0</span>
<span class="t " style="top:330px;font-size:8.7px;color:#303030;letter-spacing:-0.435px;right:395.44px;text-align:right;">105,840</span>
<span class="t " style="top:330px;font-size:8.7px;color:#303030;letter-spacing:-0.434px;right:359.13px;text-align:right;">0,000</span>
<span class="t " style="top:330px;font-size:8.7px;color:#303030;letter-spacing:-0.435px;right:141.43px;text-align:right;">105,84</span>
<span class="t " style="top:330px;font-size:8.7px;color:#303030;letter-spacing:-0.433px;right:96.13px;text-align:right;">0,00</span>
<span class="t " style="top:330px;font-size:8.7px;color:#303030;letter-spacing:-0.434px;right:48.43px;text-align:right;">0,000</span>
<span class="t " style="top:330px;font-size:8.7px;color:#303030;letter-spacing:-0.089px;left:1288.00px;">Normal</span>
<span class="t " style="top:346px;font-size:8.7px;color:#303030;letter-spacing:-0.438px;right:1282.14px;text-align:right;">120000</span>
<span class="t " style="top:346px;font-size:8.7px;color:#303030;letter-spacing:-0.204px;left:54.00px;">HU1118-593</span>
<span class="t " style="top:346px;font-size:8.7px;color:#303030;letter-spacing:-0.277px;left:114.00px;">1102</span>
<span class="t " style="top:346px;font-size:8.7px;color:#303030;letter-spacing:-0.368px;left:148.00px;">Presupuesto y Facturable</span>
<span class="t " style="top:346px;font-size:8.7px;color:#303030;letter-spacing:-0.124px;left:254.00px;">21/03/2020</span>
<span class="t " style="top:346px;font-size:8.7px;color:#303030;letter-spacing:-0.124px;left:313.00px;">21/03/2020</span>
<span class="t " style="top:346px;font-size:8.7px;color:#303030;letter-spacing:-0.376px;left:372.00px;">TRS0-20-0036-00</span>
<span class="t " style="top:346px;font-size:8.7px;color:#303030;letter-spacing:-0.227px;left:447.00px;">Producto</span>
<span class="t " style="top:346px;font-size:8.7px;color:#303030;letter-spacing:-0.449px;left:506.30px;">100D</span>
<span class="t " style="top:346px;font-size:8.7px;color:#303030;letter-spacing:-0.179px;left:577.00px;">Desmontaje Andamio sobre suelo</span>
<span class="t " style="top:346px;font-size:8.7px;color:#303030;right:473.70px;text-align:right;">0</span>
<span class="t " style="top:346px;font-size:8.7px;color:#303030;right:444.00px;text-align:right;">0</span>
<span class="t " style="top:346px;font-size:8.7px;color:#303030;letter-spacing:-0.435px;right:395.44px;text-align:right;">131,040</span>
<span class="t " style="top:346px;font-size:8.7px;color:#303030;letter-spacing:-0.434px;right:359.13px;text-align:right;">0,000</span>
<span class="t " style="top:346px;font-size:8.7px;color:#303030;letter-spacing:-0.435px;right:141.43px;text-align:right;">131,04</span>
<span class="t " style="top:346px;font-size:8.7px;color:#303030;letter-spacing:-0.433px;right:96.13px;text-align:right;">0,00</span>
<span class="t " style="top:346px;font-size:8.7px;color:#303030;letter-spacing:-0.434px;right:48.43px;text-align:right;">0,000</span>
<span class="t " style="top:346px;font-size:8.7px;color:#303030;letter-spacing:-0.089px;left:1288.00px;">Normal</span>
<span class="t " style="top:363px;font-size:8.7px;color:#303030;letter-spacing:-0.438px;right:1282.14px;text-align:right;">140000</span>
<span class="t " style="top:363px;font-size:8.7px;color:#303030;letter-spacing:-0.204px;left:54.00px;">HU1118-593</span>
<span class="t " style="top:363px;font-size:8.7px;color:#303030;letter-spacing:-0.277px;left:114.00px;">1102</span>
<span class="t " style="top:363px;font-size:8.7px;color:#303030;letter-spacing:-0.368px;left:148.00px;">Presupuesto y Facturable</span>
<span class="t " style="top:363px;font-size:8.7px;color:#303030;letter-spacing:-0.124px;left:254.00px;">24/03/2020</span>
<span class="t " style="top:363px;font-size:8.7px;color:#303030;letter-spacing:-0.124px;left:313.00px;">24/03/2020</span>
<span class="t " style="top:363px;font-size:8.7px;color:#303030;letter-spacing:-0.376px;left:372.00px;">TRS0-20-0038-00</span>
<span class="t " style="top:363px;font-size:8.7px;color:#303030;letter-spacing:-0.227px;left:447.00px;">Producto</span>
<span class="t " style="top:363px;font-size:8.7px;color:#303030;letter-spacing:-0.449px;left:506.30px;">100D</span>
<span class="t " style="top:363px;font-size:8.7px;color:#303030;letter-spacing:-0.179px;left:577.00px;">Desmontaje Andamio sobre suelo</span>
<span class="t " style="top:363px;font-size:8.7px;color:#303030;right:473.70px;text-align:right;">0</span>
<span class="t " style="top:363px;font-size:8.7px;color:#303030;right:444.00px;text-align:right;">0</span>
<span class="t " style="top:363px;font-size:8.7px;color:#303030;letter-spacing:-0.435px;right:395.44px;text-align:right;">490,560</span>
<span class="t " style="top:363px;font-size:8.7px;color:#303030;letter-spacing:-0.434px;right:359.13px;text-align:right;">0,000</span>
<span class="t " style="top:363px;font-size:8.7px;color:#303030;letter-spacing:-0.435px;right:141.43px;text-align:right;">490,56</span>
<span class="t " style="top:363px;font-size:8.7px;color:#303030;letter-spacing:-0.433px;right:96.13px;text-align:right;">0,00</span>
<span class="t " style="top:363px;font-size:8.7px;color:#303030;letter-spacing:-0.434px;right:48.43px;text-align:right;">0,000</span>
<span class="t " style="top:363px;font-size:8.7px;color:#303030;letter-spacing:-0.089px;left:1288.00px;">Normal</span>
<span class="t " style="top:380px;font-size:8.7px;color:#303030;letter-spacing:-0.438px;right:1282.14px;text-align:right;">180000</span>
<span class="t " style="top:380px;font-size:8.7px;color:#303030;letter-spacing:-0.204px;left:54.00px;">HU1118-593</span>
<span class="t " style="top:380px;font-size:8.7px;color:#303030;letter-spacing:-0.277px;left:114.00px;">1102</span>
<span class="t " style="top:380px;font-size:8.7px;color:#303030;letter-spacing:-0.368px;left:148.00px;">Presupuesto y Facturable</span>
<span class="t " style="top:380px;font-size:8.7px;color:#303030;letter-spacing:-0.124px;left:254.00px;">16/03/2020</span>
<span class="t " style="top:380px;font-size:8.7px;color:#303030;letter-spacing:-0.124px;left:313.00px;">16/03/2020</span>
<span class="t " style="top:380px;font-size:8.7px;color:#303030;letter-spacing:-0.376px;left:372.00px;">TRS0-20-0039-00</span>
<span class="t " style="top:380px;font-size:8.7px;color:#303030;letter-spacing:-0.227px;left:447.00px;">Producto</span>
<span class="t " style="top:380px;font-size:8.7px;color:#303030;letter-spacing:-0.449px;left:506.30px;">100D</span>
<span class="t " style="top:380px;font-size:8.7px;color:#303030;letter-spacing:-0.179px;left:577.00px;">Desmontaje Andamio sobre suelo</span>
<span class="t " style="top:380px;font-size:8.7px;color:#303030;right:473.70px;text-align:right;">0</span>
<span class="t " style="top:380px;font-size:8.7px;color:#303030;right:444.00px;text-align:right;">0</span>
<span class="t " style="top:380px;font-size:8.7px;color:#303030;letter-spacing:-0.435px;right:395.43px;text-align:right;">40,300</span>
<span class="t " style="top:380px;font-size:8.7px;color:#303030;letter-spacing:-0.434px;right:359.13px;text-align:right;">0,000</span>
<span class="t " style="top:380px;font-size:8.7px;color:#303030;letter-spacing:-0.433px;right:141.43px;text-align:right;">40,3</span>
<span class="t " style="top:380px;font-size:8.7px;color:#303030;letter-spacing:-0.433px;right:96.13px;text-align:right;">0,00</span>
<span class="t " style="top:380px;font-size:8.7px;color:#303030;letter-spacing:-0.434px;right:48.43px;text-align:right;">0,000</span>
<span class="t " style="top:380px;font-size:8.7px;color:#303030;letter-spacing:-0.089px;left:1288.00px;">Normal</span>
<span class="t " style="top:397px;font-size:8.7px;color:#303030;letter-spacing:-0.438px;right:1282.14px;text-align:right;">450000</span>
<span class="t " style="top:397px;font-size:8.7px;color:#303030;letter-spacing:-0.204px;left:54.00px;">HU1118-593</span>
<span class="t " style="top:397px;font-size:8.7px;color:#303030;letter-spacing:-0.277px;left:114.00px;">1102</span>
<span class="t " style="top:397px;font-size:8.7px;color:#303030;letter-spacing:-0.368px;left:148.00px;">Presupuesto y Facturable</span>
<span class="t " style="top:397px;font-size:8.7px;color:#303030;letter-spacing:-0.124px;left:254.00px;">20/03/2020</span>
<span class="t " style="top:397px;font-size:8.7px;color:#303030;letter-spacing:-0.124px;left:313.00px;">20/03/2020</span>
<span class="t " style="top:397px;font-size:8.7px;color:#303030;letter-spacing:-0.376px;left:372.00px;">TRS0-20-0037-00</span>
<span class="t " style="top:397px;font-size:8.7px;color:#303030;letter-spacing:-0.227px;left:447.00px;">Producto</span>
<span class="t " style="top:397px;font-size:8.7px;color:#303030;letter-spacing:-0.449px;left:506.30px;">100D</span>
<span class="t " style="top:397px;font-size:8.7px;color:#303030;letter-spacing:-0.179px;left:577.00px;">Desmontaje Andamio sobre suelo</span>
<span class="t " style="top:397px;font-size:8.7px;color:#303030;right:473.70px;text-align:right;">0</span>
<span class="t " style="top:397px;font-size:8.7px;color:#303030;right:444.00px;text-align:right;">0</span>
<span class="t " style="top:397px;font-size:8.7px;color:#303030;letter-spacing:-0.435px;right:395.43px;text-align:right;">13,020</span>
<span class="t " style="top:397px;font-size:8.7px;color:#303030;letter-spacing:-0.434px;right:359.13px;text-align:right;">0,000</span>
<span class="t " style="top:397px;font-size:8.7px;color:#303030;letter-spacing:-0.434px;right:141.43px;text-align:right;">13,02</span>
<span class="t " style="top:397px;font-size:8.7px;color:#303030;letter-spacing:-0.433px;right:96.13px;text-align:right;">0,00</span>
<span class="t " style="top:397px;font-size:8.7px;color:#303030;letter-spacing:-0.434px;right:48.43px;text-align:right;">0,000</span>
<span class="t " style="top:397px;font-size:8.7px;color:#303030;letter-spacing:-0.089px;left:1288.00px;">Normal</span>
<span class="t " style="top:413px;font-size:8.7px;color:#303030;letter-spacing:-0.438px;right:1282.14px;text-align:right;">65000</span>
<span class="t " style="top:413px;font-size:8.7px;color:#303030;letter-spacing:-0.204px;left:54.00px;">HU1118-593</span>
<span class="t " style="top:413px;font-size:8.7px;color:#303030;letter-spacing:-0.438px;left:114.00px;">2101</span>
<span class="t " style="top:413px;font-size:8.7px;color:#303030;letter-spacing:-0.368px;left:148.00px;">Presupuesto y Facturable</span>
<span class="t " style="top:413px;font-size:8.7px;color:#303030;letter-spacing:-0.124px;left:254.00px;">25/02/2020</span>
<span class="t " style="top:413px;font-size:8.7px;color:#303030;letter-spacing:-0.124px;left:313.00px;">17/03/2020</span>
<span class="t " style="top:413px;font-size:8.7px;color:#303030;letter-spacing:-0.376px;left:372.00px;">TRS0-20-0030-00</span>
<span class="t " style="top:413px;font-size:8.7px;color:#303030;letter-spacing:-0.227px;left:447.00px;">Producto</span>
<span class="t " style="top:413px;font-size:8.7px;color:#303030;letter-spacing:-0.329px;left:506.30px;">100A</span>
<span class="t " style="top:413px;font-size:8.7px;color:#303030;letter-spacing:-0.131px;left:577.00px;">Alquiler Andamio sobre suelo</span>
<span class="t " style="top:413px;font-size:8.7px;color:#303030;right:473.70px;text-align:right;">0</span>
<span class="t " style="top:413px;font-size:8.7px;color:#303030;letter-spacing:-0.438px;right:444.44px;text-align:right;">22</span>
<span class="t " style="top:413px;font-size:8.7px;color:#303030;letter-spacing:-0.251px;right:395.25px;text-align:right;">111,300</span>
<span class="t " style="top:413px;font-size:8.7px;color:#303030;letter-spacing:-0.434px;right:359.13px;text-align:right;">0,000</span>
<span class="t " style="top:413px;font-size:8.7px;color:#303030;letter-spacing:-0.438px;right:141.44px;text-align:right;">22</span>
<span class="t " style="top:413px;font-size:8.7px;color:#303030;letter-spacing:-0.433px;right:96.13px;text-align:right;">0,07</span>
<span class="t " style="top:413px;font-size:8.7px;color:#303030;letter-spacing:-0.435px;right:48.44px;text-align:right;">171,402</span>
<span class="t " style="top:430px;font-size:8.7px;color:#303030;letter-spacing:-0.438px;right:1282.14px;text-align:right;">75000</span>
<span class="t " style="top:430px;font-size:8.7px;color:#303030;letter-spacing:-0.204px;left:54.00px;">HU1118-593</span>
<span class="t " style="top:430px;font-size:8.7px;color:#303030;letter-spacing:-0.438px;left:114.00px;">2101</span>
<span class="t " style="top:430px;font-size:8.7px;color:#303030;letter-spacing:-0.368px;left:148.00px;">Presupuesto y Facturable</span>
<span class="t " style="top:430px;font-size:8.7px;color:#303030;letter-spacing:-0.124px;left:254.00px;">25/02/2020</span>
<span class="t " style="top:430px;font-size:8.7px;color:#303030;letter-spacing:-0.124px;left:313.00px;">17/03/2020</span>
<span class="t " style="top:430px;font-size:8.7px;color:#303030;letter-spacing:-0.376px;left:372.00px;">TRS0-20-0031-00</span>
<span class="t " style="top:430px;font-size:8.7px;color:#303030;letter-spacing:-0.227px;left:447.00px;">Producto</span>
<span class="t " style="top:430px;font-size:8.7px;color:#303030;letter-spacing:-0.329px;left:506.30px;">100A</span>
<span class="t " style="top:430px;font-size:8.7px;color:#303030;letter-spacing:-0.131px;left:577.00px;">Alquiler Andamio sobre suelo</span>
<span class="t " style="top:430px;font-size:8.7px;color:#303030;right:473.70px;text-align:right;">0</span>
<span class="t " style="top:430px;font-size:8.7px;color:#303030;letter-spacing:-0.438px;right:444.44px;text-align:right;">22</span>
<span class="t " style="top:430px;font-size:8.7px;color:#303030;letter-spacing:-0.251px;right:395.25px;text-align:right;">111,300</span>
<span class="t " style="top:430px;font-size:8.7px;color:#303030;letter-spacing:-0.434px;right:359.13px;text-align:right;">0,000</span>
<span class="t " style="top:430px;font-size:8.7px;color:#303030;letter-spacing:-0.438px;right:141.44px;text-align:right;">22</span>
<span class="t " style="top:430px;font-size:8.7px;color:#303030;letter-spacing:-0.433px;right:96.13px;text-align:right;">0,07</span>
<span class="t " style="top:430px;font-size:8.7px;color:#303030;letter-spacing:-0.435px;right:48.44px;text-align:right;">171,402</span>
<span class="t " style="top:447px;font-size:8.7px;color:#303030;letter-spacing:-0.438px;right:1282.14px;text-align:right;">85000</span>
<span class="t " style="top:447px;font-size:8.7px;color:#303030;letter-spacing:-0.204px;left:54.00px;">HU1118-593</span>
<span class="t " style="top:447px;font-size:8.7px;color:#303030;letter-spacing:-0.438px;left:114.00px;">2101</span>
<span class="t " style="top:447px;font-size:8.7px;color:#303030;letter-spacing:-0.368px;left:148.00px;">Presupuesto y Facturable</span>
<span class="t " style="top:447px;font-size:8.7px;color:#303030;letter-spacing:-0.124px;left:254.00px;">25/02/2020</span>
<span class="t " style="top:447px;font-size:8.7px;color:#303030;letter-spacing:-0.124px;left:313.00px;">17/03/2020</span>
<span class="t " style="top:447px;font-size:8.7px;color:#303030;letter-spacing:-0.376px;left:372.00px;">TRS0-20-0032-00</span>
<span class="t " style="top:447px;font-size:8.7px;color:#303030;letter-spacing:-0.227px;left:447.00px;">Producto</span>
<span class="t " style="top:447px;font-size:8.7px;color:#303030;letter-spacing:-0.329px;left:506.30px;">100A</span>
<span class="t " style="top:447px;font-size:8.7px;color:#303030;letter-spacing:-0.131px;left:577.00px;">Alquiler Andamio sobre suelo</span>
<span class="t " style="top:447px;font-size:8.7px;color:#303030;right:473.70px;text-align:right;">0</span>
<span class="t " style="top:447px;font-size:8.7px;color:#303030;letter-spacing:-0.438px;right:444.44px;text-align:right;">22</span>
<span class="t " style="top:447px;font-size:8.7px;color:#303030;letter-spacing:-0.251px;right:395.25px;text-align:right;">111,300</span>
<span class="t " style="top:447px;font-size:8.7px;color:#303030;letter-spacing:-0.434px;right:359.13px;text-align:right;">0,000</span>
<span class="t " style="top:447px;font-size:8.7px;color:#303030;letter-spacing:-0.438px;right:141.44px;text-align:right;">22</span>
<span class="t " style="top:447px;font-size:8.7px;color:#303030;letter-spacing:-0.433px;right:96.13px;text-align:right;">0,07</span>
<span class="t " style="top:447px;font-size:8.7px;color:#303030;letter-spacing:-0.435px;right:48.44px;text-align:right;">171,402</span>
<span class="t " style="top:463px;font-size:8.7px;color:#303030;letter-spacing:-0.438px;right:1282.14px;text-align:right;">105000</span>
<span class="t " style="top:463px;font-size:8.7px;color:#303030;letter-spacing:-0.204px;left:54.00px;">HU1118-593</span>
<span class="t " style="top:463px;font-size:8.7px;color:#303030;letter-spacing:-0.438px;left:114.00px;">2101</span>
<span class="t " style="top:463px;font-size:8.7px;color:#303030;letter-spacing:-0.368px;left:148.00px;">Presupuesto y Facturable</span>
<span class="t " style="top:463px;font-size:8.7px;color:#303030;letter-spacing:-0.124px;left:254.00px;">02/03/2020</span>
<span class="t " style="top:463px;font-size:8.7px;color:#303030;letter-spacing:-0.124px;left:313.00px;">13/03/2020</span>
<span class="t " style="top:463px;font-size:8.7px;color:#303030;letter-spacing:-0.376px;left:372.00px;">TRS0-20-0034-00</span>
<span class="t " style="top:463px;font-size:8.7px;color:#303030;letter-spacing:-0.227px;left:447.00px;">Producto</span>
<span class="t " style="top:463px;font-size:8.7px;color:#303030;letter-spacing:-0.329px;left:506.30px;">100A</span>
<span class="t " style="top:463px;font-size:8.7px;color:#303030;letter-spacing:-0.131px;left:577.00px;">Alquiler Andamio sobre suelo</span>
<span class="t " style="top:463px;font-size:8.7px;color:#303030;right:473.70px;text-align:right;">0</span>
<span class="t " style="top:463px;font-size:8.7px;color:#303030;letter-spacing:-0.438px;right:444.44px;text-align:right;">12</span>
<span class="t " style="top:463px;font-size:8.7px;color:#303030;letter-spacing:-0.435px;right:395.43px;text-align:right;">60,480</span>
<span class="t " style="top:463px;font-size:8.7px;color:#303030;letter-spacing:-0.434px;right:359.13px;text-align:right;">0,000</span>
<span class="t " style="top:463px;font-size:8.7px;color:#303030;letter-spacing:-0.438px;right:141.44px;text-align:right;">12</span>
<span class="t " style="top:463px;font-size:8.7px;color:#303030;letter-spacing:-0.433px;right:96.13px;text-align:right;">0,07</span>
<span class="t " style="top:463px;font-size:8.7px;color:#303030;letter-spacing:-0.435px;right:48.43px;text-align:right;">50,803</span>
<span class="t " style="top:463px;font-size:8.7px;color:#303030;letter-spacing:-0.089px;left:1288.00px;">Normal</span>
<span class="t " style="top:480px;font-size:8.7px;color:#303030;letter-spacing:-0.330px;right:1282.03px;text-align:right;">115000</span>
<span class="t " style="top:480px;font-size:8.7px;color:#303030;letter-spacing:-0.204px;left:54.00px;">HU1118-593</span>
<span class="t " style="top:480px;font-size:8.7px;color:#303030;letter-spacing:-0.438px;left:114.00px;">2101</span>
<span class="t " style="top:480px;font-size:8.7px;color:#303030;letter-spacing:-0.368px;left:148.00px;">Presupuesto y Facturable</span>
<span class="t " style="top:480px;font-size:8.7px;color:#303030;letter-spacing:-0.124px;left:254.00px;">02/03/2020</span>
<span class="t " style="top:480px;font-size:8.7px;color:#303030;letter-spacing:-0.124px;left:313.00px;">22/03/2020</span>
<span class="t " style="top:480px;font-size:8.7px;color:#303030;letter-spacing:-0.376px;left:372.00px;">TRS0-20-0035-00</span>
<span class="t " style="top:480px;font-size:8.7px;color:#303030;letter-spacing:-0.227px;left:447.00px;">Producto</span>
<span class="t " style="top:480px;font-size:8.7px;color:#303030;letter-spacing:-0.329px;left:506.30px;">100A</span>
<span class="t " style="top:480px;font-size:8.7px;color:#303030;letter-spacing:-0.131px;left:577.00px;">Alquiler Andamio sobre suelo</span>
<span class="t " style="top:480px;font-size:8.7px;color:#303030;right:473.70px;text-align:right;">0</span>
<span class="t " style="top:480px;font-size:8.7px;color:#303030;letter-spacing:-0.438px;right:444.44px;text-align:right;">21</span>
<span class="t " style="top:480px;font-size:8.7px;color:#303030;letter-spacing:-0.435px;right:395.44px;text-align:right;">105,840</span>
<span class="t " style="top:480px;font-size:8.7px;color:#303030;letter-spacing:-0.434px;right:359.13px;text-align:right;">0,000</span>
<span class="t " style="top:480px;font-size:8.7px;color:#303030;letter-spacing:-0.438px;right:141.44px;text-align:right;">21</span>
<span class="t " style="top:480px;font-size:8.7px;color:#303030;letter-spacing:-0.433px;right:96.13px;text-align:right;">0,07</span>
<span class="t " style="top:480px;font-size:8.7px;color:#303030;letter-spacing:-0.435px;right:48.44px;text-align:right;">155,585</span>
<span class="t " style="top:480px;font-size:8.7px;color:#303030;letter-spacing:-0.089px;left:1288.00px;">Normal</span>
<span class="t " style="top:497px;font-size:8.7px;color:#303030;letter-spacing:-0.438px;right:1282.14px;text-align:right;">125000</span>
<span class="t " style="top:497px;font-size:8.7px;color:#303030;letter-spacing:-0.204px;left:54.00px;">HU1118-593</span>
<span class="t " style="top:497px;font-size:8.7px;color:#303030;letter-spacing:-0.438px;left:114.00px;">2101</span>
<span class="t " style="top:497px;font-size:8.7px;color:#303030;letter-spacing:-0.368px;left:148.00px;">Presupuesto y Facturable</span>
<span class="t " style="top:497px;font-size:8.7px;color:#303030;letter-spacing:-0.124px;left:254.00px;">02/03/2020</span>
<span class="t " style="top:497px;font-size:8.7px;color:#303030;letter-spacing:-0.124px;left:313.00px;">21/03/2020</span>
<span class="t " style="top:497px;font-size:8.7px;color:#303030;letter-spacing:-0.376px;left:372.00px;">TRS0-20-0036-00</span>
<span class="t " style="top:497px;font-size:8.7px;color:#303030;letter-spacing:-0.227px;left:447.00px;">Producto</span>
<span class="t " style="top:497px;font-size:8.7px;color:#303030;letter-spacing:-0.329px;left:506.30px;">100A</span>
<span class="t " style="top:497px;font-size:8.7px;color:#303030;letter-spacing:-0.131px;left:577.00px;">Alquiler Andamio sobre suelo</span>
<span class="t " style="top:497px;font-size:8.7px;color:#303030;right:473.70px;text-align:right;">0</span>
<span class="t " style="top:497px;font-size:8.7px;color:#303030;letter-spacing:-0.438px;right:444.44px;text-align:right;">20</span>
<span class="t " style="top:497px;font-size:8.7px;color:#303030;letter-spacing:-0.435px;right:395.44px;text-align:right;">131,040</span>
<span class="t " style="top:497px;font-size:8.7px;color:#303030;letter-spacing:-0.434px;right:359.13px;text-align:right;">0,000</span>
<span class="t " style="top:497px;font-size:8.7px;color:#303030;letter-spacing:-0.438px;right:141.44px;text-align:right;">20</span>
<span class="t " style="top:497px;font-size:8.7px;color:#303030;letter-spacing:-0.433px;right:96.13px;text-align:right;">0,07</span>
<span class="t " style="top:497px;font-size:8.7px;color:#303030;letter-spacing:-0.435px;right:48.44px;text-align:right;">183,456</span>
<span class="t " style="top:497px;font-size:8.7px;color:#303030;letter-spacing:-0.089px;left:1288.00px;">Normal</span>
<span class="t " style="top:513px;font-size:8.7px;color:#303030;letter-spacing:-0.438px;right:1282.14px;text-align:right;">145000</span>
<span class="t " style="top:513px;font-size:8.7px;color:#303030;letter-spacing:-0.204px;left:54.00px;">HU1118-593</span>
<span class="t " style="top:513px;font-size:8.7px;color:#303030;letter-spacing:-0.438px;left:114.00px;">2101</span>
<span class="t " style="top:513px;font-size:8.7px;color:#303030;letter-spacing:-0.368px;left:148.00px;">Presupuesto y Facturable</span>
<span class="t " style="top:513px;font-size:8.7px;color:#303030;letter-spacing:-0.124px;left:254.00px;">03/03/2020</span>
<span class="t " style="top:513px;font-size:8.7px;color:#303030;letter-spacing:-0.124px;left:313.00px;">24/03/2020</span>
<span class="t " style="top:513px;font-size:8.7px;color:#303030;letter-spacing:-0.376px;left:372.00px;">TRS0-20-0038-00</span>
<span class="t " style="top:513px;font-size:8.7px;color:#303030;letter-spacing:-0.227px;left:447.00px;">Producto</span>
<span class="t " style="top:513px;font-size:8.7px;color:#303030;letter-spacing:-0.329px;left:506.30px;">100A</span>
<span class="t " style="top:513px;font-size:8.7px;color:#303030;letter-spacing:-0.131px;left:577.00px;">Alquiler Andamio sobre suelo</span>
<span class="t " style="top:513px;font-size:8.7px;color:#303030;right:473.70px;text-align:right;">0</span>
<span class="t " style="top:513px;font-size:8.7px;color:#303030;letter-spacing:-0.438px;right:444.44px;text-align:right;">22</span>
<span class="t " style="top:513px;font-size:8.7px;color:#303030;letter-spacing:-0.435px;right:395.44px;text-align:right;">490,560</span>
<span class="t " style="top:513px;font-size:8.7px;color:#303030;letter-spacing:-0.434px;right:359.13px;text-align:right;">0,000</span>
<span class="t " style="top:513px;font-size:8.7px;color:#303030;letter-spacing:-0.438px;right:141.44px;text-align:right;">22</span>
<span class="t " style="top:513px;font-size:8.7px;color:#303030;letter-spacing:-0.433px;right:96.13px;text-align:right;">0,07</span>
<span class="t " style="top:513px;font-size:8.7px;color:#303030;letter-spacing:-0.435px;right:48.44px;text-align:right;">755,462</span>
<span class="t " style="top:513px;font-size:8.7px;color:#303030;letter-spacing:-0.089px;left:1288.00px;">Normal</span>
<span class="t " style="top:530px;font-size:8.7px;color:#303030;letter-spacing:-0.438px;right:1282.14px;text-align:right;">185000</span>
<span class="t " style="top:530px;font-size:8.7px;color:#303030;letter-spacing:-0.204px;left:54.00px;">HU1118-593</span>
<span class="t " style="top:530px;font-size:8.7px;color:#303030;letter-spacing:-0.438px;left:114.00px;">2101</span>
<span class="t " style="top:530px;font-size:8.7px;color:#303030;letter-spacing:-0.368px;left:148.00px;">Presupuesto y Facturable</span>
<span class="t " style="top:530px;font-size:8.7px;color:#303030;letter-spacing:-0.124px;left:254.00px;">03/03/2020</span>
<span class="t " style="top:530px;font-size:8.7px;color:#303030;letter-spacing:-0.124px;left:313.00px;">16/03/2020</span>
<span class="t " style="top:530px;font-size:8.7px;color:#303030;letter-spacing:-0.376px;left:372.00px;">TRS0-20-0039-00</span>
<span class="t " style="top:530px;font-size:8.7px;color:#303030;letter-spacing:-0.227px;left:447.00px;">Producto</span>
<span class="t " style="top:530px;font-size:8.7px;color:#303030;letter-spacing:-0.329px;left:506.30px;">100A</span>
<span class="t " style="top:530px;font-size:8.7px;color:#303030;letter-spacing:-0.131px;left:577.00px;">Alquiler Andamio sobre suelo</span>
<span class="t " style="top:530px;font-size:8.7px;color:#303030;right:473.70px;text-align:right;">0</span>
<span class="t " style="top:530px;font-size:8.7px;color:#303030;letter-spacing:-0.438px;right:444.44px;text-align:right;">14</span>
<span class="t " style="top:530px;font-size:8.7px;color:#303030;letter-spacing:-0.435px;right:395.43px;text-align:right;">40,300</span>
<span class="t " style="top:530px;font-size:8.7px;color:#303030;letter-spacing:-0.434px;right:359.13px;text-align:right;">0,000</span>
<span class="t " style="top:530px;font-size:8.7px;color:#303030;letter-spacing:-0.438px;right:141.44px;text-align:right;">14</span>
<span class="t " style="top:530px;font-size:8.7px;color:#303030;letter-spacing:-0.433px;right:96.13px;text-align:right;">0,07</span>
<span class="t " style="top:530px;font-size:8.7px;color:#303030;letter-spacing:-0.435px;right:48.43px;text-align:right;">39,494</span>
<span class="t " style="top:530px;font-size:8.7px;color:#303030;letter-spacing:-0.089px;left:1288.00px;">Normal</span>
<span class="t " style="top:547px;font-size:8.7px;color:#303030;letter-spacing:-0.438px;right:1282.14px;text-align:right;">455000</span>
<span class="t " style="top:547px;font-size:8.7px;color:#303030;letter-spacing:-0.204px;left:54.00px;">HU1118-593</span>
<span class="t " style="top:547px;font-size:8.7px;color:#303030;letter-spacing:-0.438px;left:114.00px;">2101</span>
<span class="t " style="top:547px;font-size:8.7px;color:#303030;letter-spacing:-0.368px;left:148.00px;">Presupuesto y Facturable</span>
<span class="t " style="top:547px;font-size:8.7px;color:#303030;letter-spacing:-0.124px;left:254.00px;">02/03/2020</span>
<span class="t " style="top:547px;font-size:8.7px;color:#303030;letter-spacing:-0.124px;left:313.00px;">20/03/2020</span>
<span class="t " style="top:547px;font-size:8.7px;color:#303030;letter-spacing:-0.376px;left:372.00px;">TRS0-20-0037-00</span>
<span class="t " style="top:547px;font-size:8.7px;color:#303030;letter-spacing:-0.227px;left:447.00px;">Producto</span>
<span class="t " style="top:547px;font-size:8.7px;color:#303030;letter-spacing:-0.329px;left:506.30px;">100A</span>
<span class="t " style="top:547px;font-size:8.7px;color:#303030;letter-spacing:-0.131px;left:577.00px;">Alquiler Andamio sobre suelo</span>
<span class="t " style="top:547px;font-size:8.7px;color:#303030;right:473.70px;text-align:right;">0</span>
<span class="t " style="top:547px;font-size:8.7px;color:#303030;letter-spacing:-0.438px;right:444.44px;text-align:right;">19</span>
<span class="t " style="top:547px;font-size:8.7px;color:#303030;letter-spacing:-0.435px;right:395.43px;text-align:right;">13,020</span>
<span class="t " style="top:547px;font-size:8.7px;color:#303030;letter-spacing:-0.434px;right:359.13px;text-align:right;">0,000</span>
<span class="t " style="top:547px;font-size:8.7px;color:#303030;letter-spacing:-0.438px;right:141.44px;text-align:right;">19</span>
<span class="t " style="top:547px;font-size:8.7px;color:#303030;letter-spacing:-0.433px;right:96.13px;text-align:right;">0,07</span>
<span class="t " style="top:547px;font-size:8.7px;color:#303030;letter-spacing:-0.435px;right:48.43px;text-align:right;">17,317</span>
<span class="t " style="top:547px;font-size:8.7px;color:#303030;letter-spacing:-0.089px;left:1288.00px;">Normal</span>
<svg style="left:0;top:0" width="1332" height="588" viewBox="0 0 1332 588"><g fill="none" stroke="#00ff00" stroke-width="2.7" stroke-linejoin="round"><rect x="18.0" y="-0.2" width="446.3" height="16.2" rx="0.8"/><rect x="242.9" y="31.6" width="49.0" height="65.9" rx="0.8"/><rect x="344.8" y="29.6" width="110.5" height="67.6" rx="0.8"/><rect x="460.8" y="31.4" width="111.1" height="65.9" rx="0.8"/><rect x="8.0" y="241.6" width="1310.7" height="318.7" rx="0.8"/></g><path d="M327.9 10.1L218.2 8.6" stroke="#00ff00" stroke-width="2.7" stroke-linecap="round" fill="none"/><path d="M205.2 8.4L218.2 4.9L218.1 12.3Z" fill="#00ff00"/><path d="M295.1 166.7L276.9 113.1" stroke="#00ff00" stroke-width="2.6" stroke-linecap="round" fill="none"/><path d="M273.0 101.7L280.9 111.7L272.8 114.4Z" fill="#00ff00"/><path d="M440.6 170.2L409.2 116.4" stroke="#00ff00" stroke-width="2.6" stroke-linecap="round" fill="none"/><path d="M403.1 106.0L412.9 114.2L405.4 118.5Z" fill="#00ff00"/><path d="M563.3 167.3L526.3 117.7" stroke="#00ff00" stroke-width="2.6" stroke-linecap="round" fill="none"/><path d="M519.1 108.1L529.7 115.1L522.8 120.3Z" fill="#00ff00"/><path d="M747.8 148.5L712.1 215.2" stroke="#00ff00" stroke-width="2.6" stroke-linecap="round" fill="none"/><path d="M706.4 225.8L708.3 213.2L715.9 217.3Z" fill="#00ff00"/></svg>
<div class="r" style="left:836.8px;top:-2px;width:310.4px;height:22.8px;background:#1f1f1f;border-radius:5px;box-shadow:0 9px 38px rgba(0,0,0,0.28);"></div>
<div class="r" style="left:836.8px;top:-2px;width:37px;height:22.8px;background:#282625;border-radius:5px 0 0 5px;"></div>
<svg style="left:0;top:0" width="1332" height="24" viewBox="0 0 1332 24"><g fill="none" stroke="#d2d2d2" stroke-width="1.1" stroke-linecap="round"><path d="M852.6 5.6L863.4 15.4"/><g transform="rotate(45 858.2 10.3)"><rect x="855.9" y="4.3" width="4.6" height="5" rx="0.8"/><path d="M854.4 9.8H862M858.2 9.8V16.6"/></g></g><g fill="#fff"><rect x="883.1" y="10.8" width="2.9" height="5.7"/><rect x="887.5" y="8.4" width="2.9" height="8.1"/><rect x="891.9" y="6.3" width="2.9" height="10.2"/><rect x="896.2" y="4.9" width="2.9" height="11.6"/></g><g fill="none" stroke="#ececec" stroke-width="1.5"><path d="M1054.2 10.6H1063.9"/><rect x="1087.5" y="8" width="7.2" height="7.2" rx="1.8"/><path d="M1089.6 7.6C1089.8 6.2 1090.6 5.7 1091.8 5.7H1094.8C1096.4 5.7 1097 6.4 1097 7.9V10.8C1097 12.2 1096.5 12.9 1095.2 13.1"/><path d="M1121.4 6.1L1129.9 14.7M1129.9 6.1L1121.4 14.7" stroke="#fff" stroke-width="1.6"/></g></svg>
<span class="t " style="top:5px;font-size:9.5px;color:#f2f2f2;letter-spacing:0.030px;left:969.90px;">10.20.0.10</span>
</div></body></html>
